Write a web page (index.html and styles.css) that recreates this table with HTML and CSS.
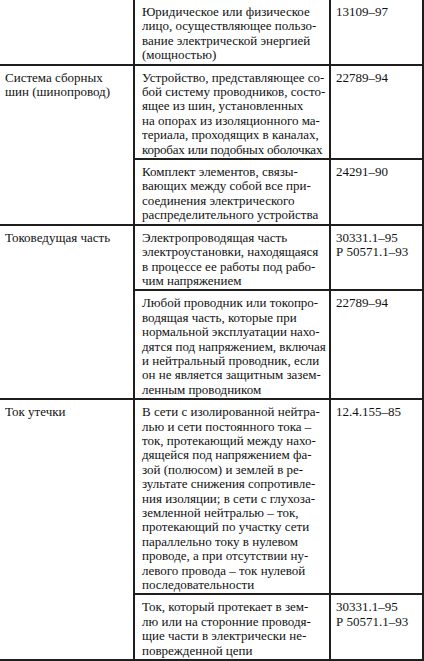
FILE: index.html
```html
<!DOCTYPE html>
<html lang="ru">
<head>
<meta charset="utf-8">
<title>Термины</title>
<link rel="stylesheet" href="styles.css">
</head>
<body>
<table class="terms">
  <colgroup>
    <col class="col-term">
    <col class="col-def">
    <col class="col-std">
  </colgroup>
  <tbody>
    <tr>
      <td class="term"></td>
      <td class="def">Юридическое или физическое<br>лицо, осуществляющее пользо-<br>вание электрической энергией<br>(мощностью)</td>
      <td class="std">13109–97</td>
    </tr>
    <tr>
      <td class="term" rowspan="2">Система сборных<br>шин (шинопровод)</td>
      <td class="def">Устройство, представляющее со-<br>бой систему проводников, состо-<br>ящее из шин, установленных<br>на опорах из изоляционного ма-<br>териала, проходящих в каналах,<br><span class="tight">коробах или подобных оболочках</span></td>
      <td class="std">22789–94</td>
    </tr>
    <tr>
      <td class="def">Комплект элементов, связы-<br>вающих между собой все при-<br>соединения электрического<br>распределительного устройства</td>
      <td class="std">24291–90</td>
    </tr>
    <tr>
      <td class="term" rowspan="2">Токоведущая часть</td>
      <td class="def">Электропроводящая часть<br>электроустановки, находящаяся<br>в процессе ее работы под рабо-<br>чим напряжением</td>
      <td class="std">30331.1–95<br>Р 50571.1–93</td>
    </tr>
    <tr>
      <td class="def">Любой проводник или токопро-<br>водящая часть, которые при<br>нормальной эксплуатации нахо-<br>дятся под напряжением, включая<br>и нейтральный проводник, если<br>он не является защитным зазем-<br>ленным проводником</td>
      <td class="std">22789–94</td>
    </tr>
    <tr>
      <td class="term" rowspan="2">Ток утечки</td>
      <td class="def">В сети с изолированной нейтра-<br>лью и сети постоянного тока –<br>ток, протекающий между нахо-<br>дящейся под напряжением фа-<br>зой (полюсом) и землей в ре-<br>зультате снижения сопротивле-<br>ния изоляции; в сети с глухоза-<br>земленной нейтралью – ток,<br>протекающий по участку сети<br>параллельно току в нулевом<br>проводе, а при отсутствии ну-<br>левого провода – ток нулевой<br>последовательности</td>
      <td class="std">12.4.155–85</td>
    </tr>
    <tr>
      <td class="def">Ток, который протекает в зем-<br>лю или на сторонние проводя-<br>щие части в электрически не-<br>поврежденной цепи</td>
      <td class="std">30331.1–95<br>Р 50571.1–93</td>
    </tr>
  </tbody>
</table>
</body>
</html>
```

FILE: styles.css
```css
html,
body {
  margin: 0;
  padding: 0;
  background: #ffffff;
}

body {
  color: #111111;
}

.terms {
  border-collapse: collapse;
  table-layout: fixed;
  width: 423px;
  margin-top: -2px;
}

.col-term {
  width: 134px;
}

.col-def {
  width: 196px;
}

.col-std {
  width: 93px;
}

.terms td {
  font-family: "Liberation Serif", "Times New Roman", Times, serif;
  font-size: 13px;
  border: 2px solid #1e1e1e;
  vertical-align: top;
  line-height: 14.4px;
  padding: 5px 2px 1px 7px;
  white-space: nowrap;
  overflow: hidden;
}

.terms td.term {
  border-left: none;
  padding-left: 5px;
}

.terms td.def {
  padding-left: 7px;
}

.terms td.std {
  padding-left: 5px;
}

.tight {
  letter-spacing: -0.2px;
}
```
